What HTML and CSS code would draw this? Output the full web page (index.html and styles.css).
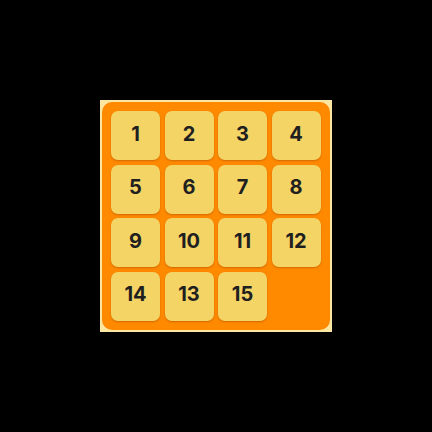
FILE: index.html
```html
<!DOCTYPE html>
<html>
<head>
<meta charset="utf-8">
<link rel="stylesheet" href="styles.css">
</head>
<body>
<div class="stage">
  <div class="frame">
    <div class="board">
      <div class="tile">1</div>
      <div class="tile">2</div>
      <div class="tile">3</div>
      <div class="tile">4</div>
      <div class="tile">5</div>
      <div class="tile">6</div>
      <div class="tile">7</div>
      <div class="tile">8</div>
      <div class="tile">9</div>
      <div class="tile">10</div>
      <div class="tile">11</div>
      <div class="tile">12</div>
      <div class="tile">14</div>
      <div class="tile">13</div>
      <div class="tile">15</div>
      <div class="empty"></div>
    </div>
  </div>
</div>
</body>
</html>
```
FILE: styles.css
```css
html, body {
  margin: 0;
  padding: 0;
  background: #000;
}
.stage {
  width: 432px;
  height: 432px;
  display: flex;
  align-items: center;
  justify-content: center;
}
.frame {
  width: 232px;
  height: 232px;
  box-sizing: border-box;
  padding: 2px;
  background: #fbe7a1;
}
.board {
  width: 228px;
  height: 228px;
  box-sizing: border-box;
  background: #ff8a00;
  border-radius: 10px;
  padding: 9px 9px 9px 9px;
  display: grid;
  grid-template-columns: repeat(4, 49px);
  grid-template-rows: repeat(4, 49px);
  column-gap: 4.5px;
  row-gap: 4.5px;
}
.tile {
  background: #f4d465;
  border-radius: 7px;
  box-shadow: 0 1px 2px rgba(190, 90, 0, 0.7);
  display: flex;
  align-items: center;
  justify-content: center;
  padding-bottom: 4px;
  box-sizing: border-box;
  font-family: Inter, "Noto Sans", sans-serif;
  font-weight: 700;
  font-size: 20px;
  color: #1f1f1f;
}
```
